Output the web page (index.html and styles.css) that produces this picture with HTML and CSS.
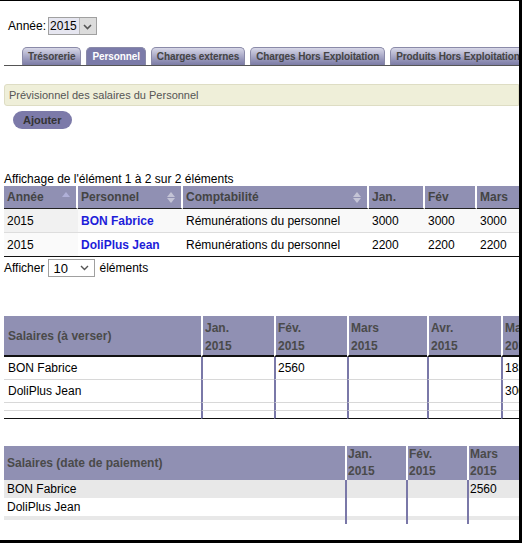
FILE: index.html
```html
<!DOCTYPE html>
<html lang="fr">
<head>
  <meta charset="UTF-8">
  <title>Prévisionnel - Personnel</title>
  <link rel="stylesheet" href="styles.css">
</head>
<body>
  <div class="frame">
    <div class="year-row">
      <span>Année:</span>
      <span class="year-select"><span class="year-value">2015</span><span class="year-btn"><svg width="9" height="6" viewBox="0 0 9 6"><path d="M1 1 L4.5 4.5 L8 1" fill="none" stroke="#555" stroke-width="1.6"/></svg></span></span>
    </div>

    <div class="tabs">
      <span class="tab">Trésorerie</span>
      <span class="tab active">Personnel</span>
      <span class="tab">Charges externes</span>
      <span class="tab">Charges Hors Exploitation</span>
      <span class="tab">Produits Hors Exploitation</span>
    </div>

    <div class="info">Prévisionnel des salaires du Personnel</div>
    <button class="btn">Ajouter</button>

    <div class="table-info">Affichage de l'élément 1 à 2 sur 2 éléments</div>
    <table class="list">
      <colgroup>
        <col style="width:74px"><col style="width:105px"><col style="width:186px">
        <col style="width:56px"><col style="width:52px"><col style="width:56px"><col style="width:56px">
      </colgroup>
      <thead>
        <tr>
          <th class="sort-asc">Année</th>
          <th class="sortable">Personnel</th>
          <th class="sortable">Comptabilité</th>
          <th>Jan.</th>
          <th>Fév</th>
          <th>Mars</th>
          <th>Avr.</th>
        </tr>
      </thead>
      <tbody>
        <tr class="odd">
          <td class="sorted">2015</td>
          <td><a href="#">BON Fabrice</a></td>
          <td>Rémunérations du personnel</td>
          <td>3000</td><td>3000</td><td>3000</td><td>3000</td>
        </tr>
        <tr class="even">
          <td class="sorted">2015</td>
          <td><a href="#">DoliPlus Jean</a></td>
          <td>Rémunérations du personnel</td>
          <td>2200</td><td>2200</td><td>2200</td><td>2200</td>
        </tr>
      </tbody>
    </table>
    <div class="length">
      Afficher
      <span class="len-select"><span>10</span><svg width="9" height="6" viewBox="0 0 9 6"><path d="M1 1 L4.5 4.5 L8 1" fill="none" stroke="#555" stroke-width="1.4"/></svg></span>
      éléments
    </div>

    <table class="grid pay">
      <colgroup>
        <col style="width:197px"><col style="width:73px"><col style="width:73px">
        <col style="width:80px"><col style="width:74px"><col style="width:74px">
      </colgroup>
      <thead>
        <tr>
          <th class="name">Salaires (à verser)</th>
          <th>Jan.<br>2015</th>
          <th>Fév.<br>2015</th>
          <th>Mars<br>2015</th>
          <th>Avr.<br>2015</th>
          <th>Mai<br>2015</th>
        </tr>
      </thead>
      <tbody>
        <tr><td class="name">BON Fabrice</td><td></td><td>2560</td><td></td><td></td><td>1830</td></tr>
        <tr><td class="name">DoliPlus Jean</td><td></td><td></td><td></td><td></td><td>3000</td></tr>
        <tr class="blank"><td class="name"></td><td></td><td></td><td></td><td></td><td></td></tr>
        <tr class="blank"><td class="name"></td><td></td><td></td><td></td><td></td><td></td></tr>
      </tbody>
    </table>

    <table class="grid paid">
      <colgroup>
        <col style="width:341px"><col style="width:61px"><col style="width:61px"><col style="width:61px">
      </colgroup>
      <thead>
        <tr>
          <th class="name">Salaires (date de paiement)</th>
          <th>Jan.<br>2015</th>
          <th>Fév.<br>2015</th>
          <th>Mars<br>2015</th>
        </tr>
      </thead>
      <tbody>
        <tr class="shade"><td class="name">BON Fabrice</td><td></td><td></td><td>2560</td></tr>
        <tr><td class="name">DoliPlus Jean</td><td></td><td></td><td></td></tr>
        <tr class="shade thin"><td class="name"></td><td></td><td></td><td></td></tr>
        <tr class="thin"><td class="name"></td><td></td><td></td><td></td></tr>
      </tbody>
    </table>
  </div>
</body>
</html>
```

FILE: styles.css
```css
body {
  margin: 0;
  font-family: "Liberation Sans", Arial, sans-serif;
  font-size: 12px;
  color: #000;
  overflow: hidden;
}
.frame {
  width: 522px;
  height: 543px;
  box-sizing: border-box;
  border-top: 1px solid #000;
  border-right: 3px solid #000;
  border-bottom: 3px solid #000;
  padding-left: 4px;
  overflow: hidden;
}
.year-row {
  display: flex;
  align-items: center;
  gap: 2px;
  margin: 16px 0 0 4px;
  height: 18px;
}
.year-select {
  display: flex;
  height: 18px;
  border: 1px solid #a0a0a0;
  box-sizing: border-box;
  background: #e6e6f0;
}
.year-value {
  padding: 0 2px 0 1px;
  line-height: 16px;
  font-size: 12px;
}
.year-btn {
  width: 16px;
  display: flex;
  align-items: center;
  justify-content: center;
  background: #dcdcdc;
  border-left: 1px solid #b8b8b8;
  padding-top: 2px;
}
.tabs {
  display: flex;
  gap: 5px;
  margin-top: 12px;
  padding-left: 18px;
  border-bottom: 1px solid #555;
  white-space: nowrap;
  height: 18px;
}
.tab {
  height: 18px;
  box-sizing: border-box;
  padding: 3px 5px 0;
  font-size: 10px;
  font-weight: bold;
  letter-spacing: -0.1px;
  color: #444;
  background: linear-gradient(#d8d8e8, #9494b8 70%, #7c7ca6);
  border: 1px solid #8a8aa8;
  border-bottom: none;
  border-radius: 5px 5px 0 0;
}
.tab.active {
  background: #7b7ba9;
  color: #fff;
}
.info {
  margin-top: 18px;
  height: 22px;
  box-sizing: border-box;
  padding: 4px 4px;
  font-size: 11px;
  color: #555;
  background: #efefd9;
  border: 1px solid #deddc4;
  border-radius: 3px 0 0 3px;
}
.btn {
  margin: 5px 0 0 9px;
  height: 18px;
  padding: 0 10px;
  border: none;
  border-radius: 9px;
  background: #7c7aa9;
  color: #333;
  font: bold 11px "Liberation Sans", Arial, sans-serif;
}
.table-info {
  margin-top: 43px;
  line-height: 14px;
}
table {
  border-collapse: separate;
  border-spacing: 0;
  table-layout: fixed;
}
.list {
  width: 585px;
}
.list th {
  height: 22px;
  padding: 0 3px;
  text-align: left;
  background: #9090b3;
  color: #444;
  border-right: 2px solid #fff;
  border-bottom: 1px solid #222;
  font-size: 12px;
  position: relative;
  white-space: nowrap;
  overflow: hidden;
}
.list th.sortable::after,
.list th.sort-asc::after {
  content: "";
  position: absolute;
  right: 6px;
  top: 6px;
  width: 0;
  height: 0;
  border-left: 4px solid transparent;
  border-right: 4px solid transparent;
  border-bottom: 5px solid #b0b0d8;
}
.list th.sortable::after {
  border-bottom-color: #c4c4d6;
}
.list th.sortable::before {
  content: "";
  position: absolute;
  right: 6px;
  top: 12px;
  width: 0;
  height: 0;
  border-left: 4px solid transparent;
  border-right: 4px solid transparent;
  border-top: 5px solid #c4c4d6;
}
.list td {
  height: 23px;
  padding: 0 3px;
  border-bottom: 1px solid #ddd;
  white-space: nowrap;
  overflow: hidden;
}
.list tbody tr:last-child td {
  border-bottom: 1px solid #111;
}
.list tr.odd td {
  background: #f9f9f9;
}
.list tr.odd td.sorted {
  background: #f1f1f1;
}
.list tr.even td.sorted {
  background: #fafafa;
}
.list a {
  color: #1d1dd9;
  font-weight: bold;
  text-decoration: none;
}
.length {
  display: flex;
  align-items: center;
  gap: 4px;
  margin-top: 2px;
  height: 18px;
}
.len-select {
  display: flex;
  align-items: center;
  justify-content: space-between;
  width: 47px;
  height: 18px;
  box-sizing: border-box;
  border: 1px solid #a0a0a0;
  padding: 0 5px 0 4px;
  font-size: 13px;
}
.grid {
  margin-top: 39px;
}
.grid th {
  background: #9090b3;
  color: #4a4a4a;
  text-align: left;
  vertical-align: top;
  font-size: 12px;
  border-left: 2px solid #fff;
  white-space: nowrap;
  overflow: hidden;
}
.grid th.name {
  vertical-align: middle;
  border-left: none;
}
.grid td {
  border-left: 2px solid #7a78a8;
  white-space: nowrap;
  overflow: hidden;
}
.grid td.name {
  border-left: none;
}
.pay {
  width: 571px;
}
.pay th {
  height: 39px;
  padding: 3px 2px 0;
  line-height: 18px;
  box-sizing: border-box;
  border-bottom: 2px solid #111;
}
.pay th.name {
  padding: 0 4px;
}
.pay td {
  height: 22px;
  padding: 0 2px;
  border-bottom: 1px solid #d8d8d8;
}
.pay td.name {
  padding-left: 4px;
}
.pay tr.blank td {
  height: 7px;
}
.pay tbody tr:last-child td {
  border-bottom: 1px solid #111;
}
.paid {
  width: 524px;
  margin-top: 27px;
}
.paid th {
  height: 34px;
  padding: 0 1px;
  line-height: 17px;
  box-sizing: border-box;
}
.paid th.name {
  padding: 0 3px;
}
.paid td {
  height: 18px;
  padding: 0 1px;
}
.paid td.name {
  padding-left: 3px;
}
.paid tr.shade td {
  background: #e8e8e8;
}
.paid tr.thin td {
  height: 4px;
}
```
